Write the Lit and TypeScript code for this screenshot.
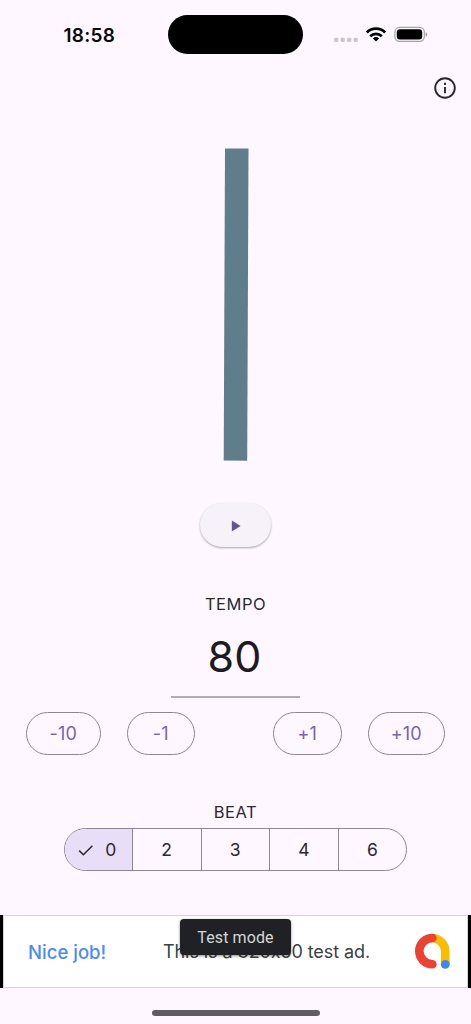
import { LitElement, html, css, svg } from "lit";
import { customElement, state } from "lit/decorators.js";
import { classMap } from "lit/directives/class-map.js";

@customElement("status-bar")
class StatusBar extends LitElement {
  static styles = css`
    :host { display: grid; grid-template-columns: 168px 135px 1fr; height: 70px; box-sizing: border-box; padding-top: 15px; }
    .time { font-weight: 600; font-size: 19px; line-height: 41px; height: 40px; padding-left: 63.5px; color: #0b0a0c; letter-spacing: 0.25px; }
    .island { height: 39px; border-radius: 20px; background: #000; }
    .icons { display: block; width: 168px; height: 40px; }
  `;
  render() {
    return html`
      <div class="time">18:58</div>
      <div class="island"></div>
      <svg class="icons" viewBox="303 15 168 40">
        <g fill="#cbc5ce">
          ${[336.2, 342.7, 349.2, 355.7].map((x) => svg`<rect x=${x - 2.1} y="37.8" width="4.2" height="4.2" rx="1.3"/>`)}
        </g>
        <g fill="none" stroke="#000" stroke-width="2.8">
          <path d="M366.9 32.4A13 13 0 0 1 385.1 32.4"/>
          <path d="M370.2 36.3A8.3 8.3 0 0 1 381.8 36.3"/>
        </g>
        <path d="M372.9 38.5A4.5 4.5 0 0 1 379.1 38.5L376 41.6Z"/>
        <rect x="394.9" y="27.4" width="29.4" height="14" rx="4.6" fill="none" stroke="#a6a2a8" stroke-width="1.2"/>
        <rect x="396.8" y="29.2" width="25.4" height="10.4" rx="3"/>
        <path d="M425.6 32.2Q427.4 32.8 427.4 34.5T425.6 36.8Z" fill="#a6a2a8"/>
      </svg>
    `;
  }
}

@customElement("ad-banner")
class AdBanner extends LitElement {
  static styles = css`
    :host { display: block; height: 73px; box-sizing: border-box; background: #000; padding: 0 3px; position: relative; }
    .body { height: 73px; box-sizing: border-box; background: #fff; border: 1px solid #ccd6db; display: flex; align-items: center; white-space: nowrap; }
    .cheer { width: 135px; padding-left: 24px; box-sizing: border-box; color: #4c8bf5; font-size: 18.5px; font-weight: 500; letter-spacing: 0.02px; }
    .copy { width: 240px; margin-left: 24px; color: #3c4043; font-size: 18px; letter-spacing: -0.07px; }
    .logo { width: 38px; height: 38px; margin-left: 10px; flex: none; }
    .tag { position: absolute; left: 180px; top: 4px; width: 111px; height: 36px; line-height: 37px; border-radius: 4px; background: #202124; color: #d5d6d9; text-align: center; font-family: Roboto, Inter, sans-serif; font-size: 16px; letter-spacing: 0.1px; box-shadow: 0 1px 3px rgba(0, 0, 0, 0.45); }
  `;
  render() {
    return html`
      <div class="body">
        <span class="cheer">Nice job!</span>
        <span class="copy">This is a 320x50 test ad.</span>
        <svg class="logo" viewBox="413 933 38 38" fill="none" stroke-width="8.6" stroke-linecap="round">
          <path d="M431.7 938A13.6 13.6 0 0 1 445.3 951.6V964" stroke="#fbbc04"/>
          <path d="M432.4 938A13.1 13.1 0 1 0 432.4 964.2" stroke="#ea4335"/>
          <circle cx="445.3" cy="964.3" r="4.4" fill="#4285f4"/>
        </svg>
      </div>
      <div class="tag">Test mode</div>
    `;
  }
}

@customElement("app-root")
class AppRoot extends LitElement {
  @state() private tempo = 80;
  @state() private beat = 0;

  static styles = css`
    :host { display: flex; flex-direction: column; width: 471px; height: 1024px; overflow: hidden; background: #fef7ff; color: #1d1b20; font-family: Inter, "Liberation Sans", sans-serif; }
    button { font: inherit; color: inherit; margin: 0; padding: 0; background: none; border: 0; display: flex; align-items: center; justify-content: center; box-sizing: border-box; }
    .appbar { display: flex; justify-content: flex-end; height: 78px; padding: 6px 14px 0 0; box-sizing: border-box; }
    .appbar svg { width: 24px; height: 24px; }
    .stage { display: flex; justify-content: center; height: 355px; flex: none; }
    .stage svg { width: 40px; height: 320px; }
    .play { align-self: center; width: 71px; height: 44px; flex: none; border-radius: 22px; background: #f7f2fa; box-shadow: 0 1px 2px rgba(0, 0, 0, 0.28), 0 1px 3px rgba(0, 0, 0, 0.08); }
    .play svg { width: 10px; height: 12px; margin: 1px 0 0 1px; }
    .label { text-align: center; font-size: 16.5px; line-height: 24px; letter-spacing: 0.5px; color: #2b292e; }
    .tempo { margin-top: 45px; }
    .value { width: 129px; height: 80px; align-self: center; box-sizing: content-box; text-align: center; text-indent: -2px; font-size: 43px; line-height: 80px; letter-spacing: 0.2px; border-bottom: 2px solid #b2acb4; }
    .steps { display: flex; margin: 14px 0 0 26px; height: 43px; }
    .step { height: 43px; border: 1.3px solid #8c8791; border-radius: 22px; color: #7864ab; font-size: 18px; letter-spacing: 0.1px; }
    .wide { width: 74.5px; }
    .narrow { width: 68.5px; margin-left: 26px; }
    .plus { margin-left: 78px; }
    .widest { width: 77.5px; margin-left: 26px; }
    .beat { margin-top: 45px; }
    .segments { display: grid; grid-template-columns: 67.3px repeat(4, 68.6px); width: 343px; height: 43px; margin: 4px 0 0 64px; box-sizing: border-box; border: 1.3px solid #8c8791; border-radius: 22px; overflow: hidden; flex: none; }
    .segment { font-size: 17.5px; color: #2b292e; height: 41px; gap: 10px; padding-right: 1px; }
    .segment + .segment { border-left: 1px solid #8c8791; }
    .segment.on { background: #e8def8; padding-right: 4px; }
    .segment svg { width: 18px; height: 18px; }
    ad-banner { margin-top: 44px; flex: none; }
    .home { width: 168px; height: 5.5px; border-radius: 3px; background: #605c63; margin: 22px 0 0 152px; flex: none; }
  `;

  private step(delta: number) {
    this.tempo += delta;
  }

  render() {
    return html`
      <status-bar></status-bar>
      <div class="appbar">
        <svg viewBox="0 0 24 24" fill="none" stroke="#28262b" stroke-width="1.9">
          <circle cx="12" cy="12" r="9.8"/>
          <path d="M12 10.9V17.2M12 6.8V8.9"/>
        </svg>
      </div>
      <div class="stage">
        <svg viewBox="216 148 40 320"><path d="M225 148.4L248.5 148.6L247.2 460.8L223.7 460.6Z" fill="#607d8b"/></svg>
      </div>
      <button class="play" aria-label="Play"><svg viewBox="0 0 10 12"><path d="M.8.4L9.6 6L.8 11.6Z" fill="#65558f"/></svg></button>
      <div class="label tempo">TEMPO</div>
      <div class="value">${this.tempo}</div>
      <div class="steps">
        <button class="step wide" @click=${() => this.step(-10)}>-10</button>
        <button class="step narrow" @click=${() => this.step(-1)}>-1</button>
        <button class="step narrow plus" @click=${() => this.step(1)}>+1</button>
        <button class="step widest" @click=${() => this.step(10)}>+10</button>
      </div>
      <div class="label beat">BEAT</div>
      <div class="segments">
        ${[0, 2, 3, 4, 6].map((n) => html`
          <button class=${classMap({ segment: true, on: n === this.beat })} @click=${() => (this.beat = n)}>
            ${n === this.beat ? html`<svg viewBox="0 0 18 18" fill="none" stroke="#2b292e" stroke-width="1.6"><path d="M2.2 9.6L6.4 13.7L15.4 4.7"/></svg>` : ""}${n}
          </button>`)}
      </div>
      <ad-banner></ad-banner>
      <div class="home"></div>
    `;
  }
}
